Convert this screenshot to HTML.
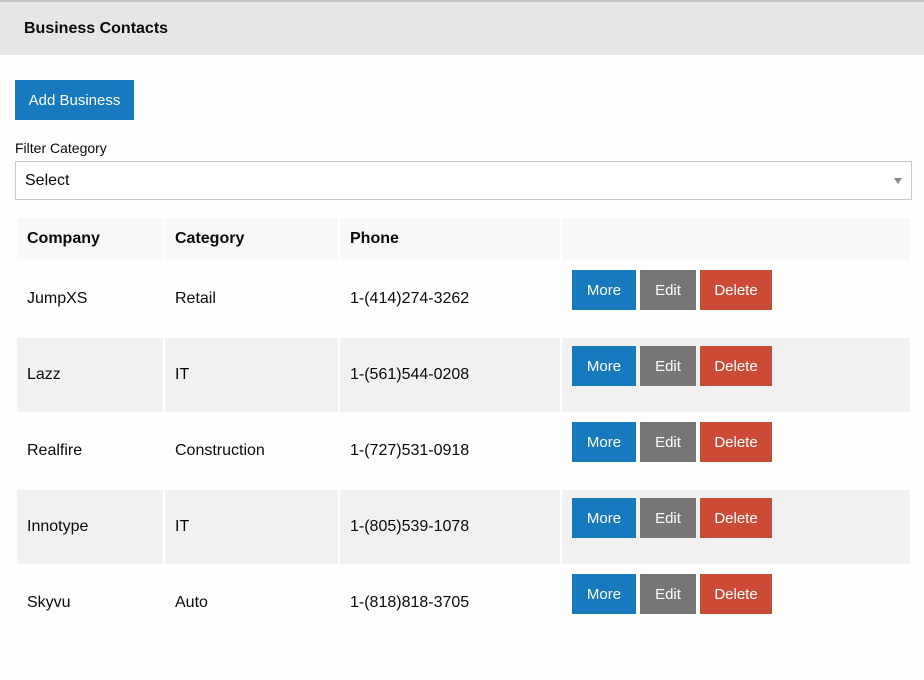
<!DOCTYPE html>
<html><head><style>
body{margin:0;background:#fefefe;font-family:"Liberation Sans",Arial,sans-serif;color:#0a0a0a;width:924px;height:680px;overflow:hidden}
.top{position:absolute;left:0;top:0;width:924px;height:55px;background:#e6e6e6;border-top:2px solid #c4c4c4;box-sizing:border-box}
.top h1{margin:0;position:absolute;left:24px;top:18px;font-size:16px;font-weight:bold}
.add{position:absolute;left:15px;top:80px;width:119px;height:40px;background:#1779be;color:#fff;font-size:15px;line-height:41px;text-align:center}
.lbl{position:absolute;left:15px;top:140px;font-size:14px}
.sel{position:absolute;left:15px;top:161px;width:897px;height:39px;border:1px solid #cacaca;box-sizing:border-box;background:#fff;font-size:16px;line-height:37px;padding-left:9px}
.sel:after{content:"";position:absolute;right:9px;top:16px;border-left:4px solid transparent;border-right:4px solid transparent;border-top:6px solid #8a8a8a}
table{position:absolute;left:15px;top:216px;width:897px;border-spacing:2px;font-size:16px}
td,th{padding:0 0 0 10px;text-align:left}
th{height:42px;background:#f8f8f8;font-weight:bold}
td{height:74px;vertical-align:middle}
tr.e td{background:#f1f1f1}
td.b{vertical-align:top;padding-top:8px;height:66px}
.btn{display:inline-block;height:40px;line-height:41px;color:#fff;font-size:15px;text-align:center;margin-right:4px;vertical-align:top}
.m{background:#1779be;width:64px}.ed{background:#767676;width:56px}.d{background:#cc4b37;width:72px}
</style></head><body>
<div class="top"><h1>Business Contacts</h1></div>
<div class="add">Add Business</div>
<div class="lbl">Filter Category</div>
<div class="sel">Select</div>
<table>
<tr><th style="width:136px">Company</th><th style="width:163px">Category</th><th style="width:210px">Phone</th><th></th></tr>
<tr><td>JumpXS</td><td>Retail</td><td>1-(414)274-3262</td><td class="b"><span class="btn m">More</span><span class="btn ed">Edit</span><span class="btn d">Delete</span></td></tr>
<tr class="e"><td>Lazz</td><td>IT</td><td>1-(561)544-0208</td><td class="b"><span class="btn m">More</span><span class="btn ed">Edit</span><span class="btn d">Delete</span></td></tr>
<tr><td>Realfire</td><td>Construction</td><td>1-(727)531-0918</td><td class="b"><span class="btn m">More</span><span class="btn ed">Edit</span><span class="btn d">Delete</span></td></tr>
<tr class="e"><td>Innotype</td><td>IT</td><td>1-(805)539-1078</td><td class="b"><span class="btn m">More</span><span class="btn ed">Edit</span><span class="btn d">Delete</span></td></tr>
<tr><td>Skyvu</td><td>Auto</td><td>1-(818)818-3705</td><td class="b"><span class="btn m">More</span><span class="btn ed">Edit</span><span class="btn d">Delete</span></td></tr>
</table>
</body></html>
